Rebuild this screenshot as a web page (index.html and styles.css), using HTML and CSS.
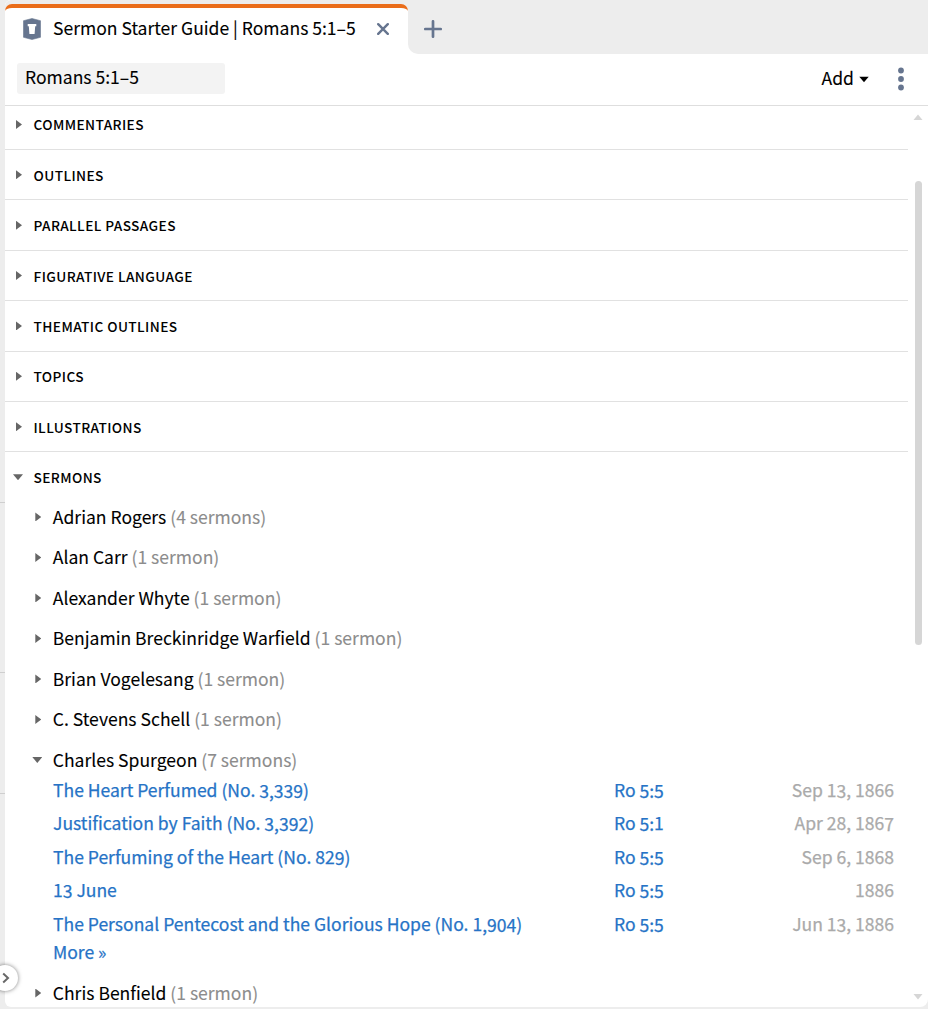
FILE: index.html
```html
<!DOCTYPE html>
<html lang="en">
<head>
<meta charset="utf-8">
<title>Sermon Starter Guide</title>
<link rel="stylesheet" href="styles.css">
</head>
<body>
<div class="app">
  <aside class="gutter"><i class="tick t1"></i><i class="tick t2"></i><i class="tick t3"></i></aside>
  <main class="pane">
    <nav class="tabs">
      <div class="tab">
        <svg class="guide-icon" width="18" height="22" viewBox="0 0 18 22"><path d="M.5 2.700L9 .5L17.500 2.700V19.300L9 21.500L.5 19.300Z" fill="#66758f" stroke="#66758f" stroke-width=".6" stroke-linejoin="round"/><path d="M4.700 6H13.300V8.200H12.200L11.600 16H6.400L5.800 8.200H4.700Z" fill="#fff"/></svg>
        <span class="tab-title">Sermon Starter Guide | Romans 5:1–5</span>
        <svg class="close" width="12" height="12" viewBox="0 0 12 12"><path d="M1.200 1.200L10.800 10.800M10.800 1.200L1.200 10.800" stroke="#66758f" stroke-width="2.400" stroke-linecap="round"/></svg>
      </div>
      <div class="tab-rest">
        <svg width="18" height="18" viewBox="0 0 18 18"><path d="M9 1.300V16.700M1.300 9H16.700" stroke="#66758f" stroke-width="2.700" stroke-linecap="round"/></svg>
      </div>
    </nav>
    <header class="toolbar">
      <div class="passage">Romans 5:1–5</div>
      <div class="add">Add</div>
      <svg class="caret" width="10" height="7" viewBox="0 0 10 7"><path d="M.3 .7H9.700L5 6.300Z"/></svg>
      <svg class="kebab" width="6" height="24" viewBox="0 0 6 24" fill="#66758f"><circle cx="3" cy="3.500" r="2.900"/><circle cx="3" cy="12" r="2.900"/><circle cx="3" cy="20.500" r="2.900"/></svg>
    </header>
    <div class="body">
      <div class="content">
        <div class="section"><i class="arrow"></i>COMMENTARIES</div>
        <div class="section"><i class="arrow"></i>OUTLINES</div>
        <div class="section"><i class="arrow"></i>PARALLEL PASSAGES</div>
        <div class="section"><i class="arrow"></i>FIGURATIVE LANGUAGE</div>
        <div class="section"><i class="arrow"></i>THEMATIC OUTLINES</div>
        <div class="section"><i class="arrow"></i>TOPICS</div>
        <div class="section"><i class="arrow"></i>ILLUSTRATIONS</div>
        <div class="section open"><i class="arrow down"></i>SERMONS</div>
        <div class="author"><i class="arrow"></i>Adrian Rogers <span>(4 sermons)</span></div>
        <div class="author"><i class="arrow"></i>Alan Carr <span>(1 sermon)</span></div>
        <div class="author"><i class="arrow"></i>Alexander Whyte <span>(1 sermon)</span></div>
        <div class="author"><i class="arrow"></i>Benjamin Breckinridge Warfield <span>(1 sermon)</span></div>
        <div class="author"><i class="arrow"></i>Brian Vogelesang <span>(1 sermon)</span></div>
        <div class="author"><i class="arrow"></i>C. Stevens Schell <span>(1 sermon)</span></div>
        <div class="author"><i class="arrow down"></i>Charles Spurgeon <span>(7 sermons)</span></div>
        <div class="sermons">
          <div class="sermon"><a>The Heart Perfumed (No. <b>3,339</b>)</a><a>Ro <b>5:5</b></a><time>Sep 1<b>3</b>, 1866</time></div>
          <div class="sermon"><a>Justification by Faith (No. <b>3,392</b>)</a><a>Ro <b>5:</b>1</a><time>Apr 28, 186<b>7</b></time></div>
          <div class="sermon"><a>The Perfuming of the Heart (No. 82<b>9</b>)</a><a>Ro <b>5:5</b></a><time>Sep 6, 1868</time></div>
          <div class="sermon"><a>1<b>3</b> June</a><a>Ro <b>5:5</b></a><time>1886</time></div>
          <div class="sermon"><a>The Personal Pentecost and the Glorious Hope (No. 1<b>,904</b>)</a><a>Ro <b>5:5</b></a><time>Jun 1<b>3</b>, 1886</time></div>
        </div>
        <div class="more">More »</div>
        <div class="author"><i class="arrow"></i>Chris Benfield <span>(1 sermon)</span></div>
      </div>
      <div class="scrollbar">
        <svg width="10" height="6" viewBox="0 0 10 6"><path d="M.5 6L5 .5L9.500 6Z" fill="#d6d6d6"/></svg>
        <div class="thumb"></div>
        <svg width="10" height="6" viewBox="0 0 10 6"><path d="M.5 0L5 5.500L9.500 0Z" fill="#d6d6d6"/></svg>
      </div>
    </div>
  </main>
  <div class="expander"><svg width="8" height="12" viewBox="0 0 8 12"><path d="M1.200 1.500L6 6L1.200 10.500" fill="none" stroke="#686868" stroke-width="2"/></svg></div>
</div>
</body>
</html>
```
FILE: styles.css
```css
* { box-sizing: border-box; }
body { margin: 0; background: #ededed; color: #000; font-family: "Noto Sans CJK SC", "Noto Sans", sans-serif; font-size: 17.550px; -webkit-text-stroke: .1px currentColor; }
.app { position: relative; display: flex; width: 928px; height: 1009px; overflow: hidden; padding-bottom: 2px; }
.gutter { position: relative; width: 5px; flex: none; }
.tick { position: absolute; left: 0; width: 5px; height: 1px; background: #cfcfcf; }
.t1 { top: 502px; }
.t2 { top: 672px; }
.t3 { top: 793px; }
.pane { flex: 1; display: flex; flex-direction: column; background: #fff; border-radius: 6px 0 8px 6px; overflow: hidden; }
.tabs { display: flex; height: 54px; flex: none; background: #fff; }
.tab { width: 403px; display: flex; align-items: center; padding-left: 18px; background: #ededed; position: relative; z-index: 0; }
.tab::before { content: ""; position: absolute; z-index: -1; inset: 4px 0 0 0; background: #fff; border-radius: 7px 7px 0 0; border-top: 4px solid #ea6d1a; }
.guide-icon { flex: none; margin-top: 3px; }
.tab-title { margin-left: 12px; line-height: 30px; width: 324px; white-space: nowrap; margin-top: 2px; }
.close { margin-top: 3px; }
.tab-rest { flex: 1; background: #ededed; border-bottom-left-radius: 10px; padding: 20px 0 0 16px; }
.tab-rest svg { display: block; }
.toolbar { height: 52px; flex: none; border-bottom: 1px solid #dedede; display: flex; align-items: center; padding: 0 24px 2px 12px; }
.passage { width: 208px; height: 31px; line-height: 28px; background: #f3f3f3; border-radius: 3px; padding-left: 8px; }
.add { margin-left: auto; line-height: 28px; margin-top: -1px; }
.caret { margin: 1px 29px 0 5px; }
.body { flex: 1; min-height: 0; display: flex; }
.content { width: 903px; overflow: hidden; }
.section { height: 50.400px; border-bottom: 1px solid #e1e1e1; padding-left: 11px; display: flex; align-items: center; font-size: 13.700px; font-weight: 500; letter-spacing: .39px; -webkit-text-stroke: 0; }
.section:first-child { margin-top: -6.300px; }
.section.open { border-bottom: 0; height: 45.500px; padding-top: 4px; }
.arrow { flex: none; width: 6px; height: 9px; margin-right: 11.500px; background: #666; clip-path: polygon(0 0, 100% 50%, 0 100%); }
.arrow.down { width: 10px; height: 6px; margin-left: -3px; margin-right: 10.500px; clip-path: polygon(0 0, 100% 0, 50% 100%); }
.author { position: relative; top: -1.800px; height: 40.500px; display: flex; align-items: center; padding-left: 30.300px; white-space: pre; }
.author .arrow { margin-top: 1px; }
.author span { color: #8c8c8c; }
.sermons { margin-top: -8.800px; }
.sermon { height: 33.500px; line-height: 33px; display: grid; grid-template-columns: 561px 100px 1fr; padding: 0 14px 0 48px; white-space: nowrap; }
.sermon a, .more { color: #2673c6; -webkit-text-stroke: .25px currentColor; }
.sermon b { font-weight: inherit; position: relative; top: 1.300px; }
.sermon time { color: #aaa; text-align: right; -webkit-text-stroke: .25px currentColor; }
.more { padding-left: 48px; line-height: 23px; height: 34px; }
.scrollbar { width: 20px; display: flex; flex-direction: column; align-items: center; padding: 8px 0 7px; }
.thumb { width: 7px; height: 464px; margin: 61px 0 auto; border-radius: 4px; background: #d6d6d6; }
.expander { position: absolute; left: -8px; top: 965px; width: 26px; height: 26px; border-radius: 50%; background: #fff; box-shadow: 0 0 4px rgba(0,0,0,.5); display: flex; align-items: center; padding-left: 10px; }
```
